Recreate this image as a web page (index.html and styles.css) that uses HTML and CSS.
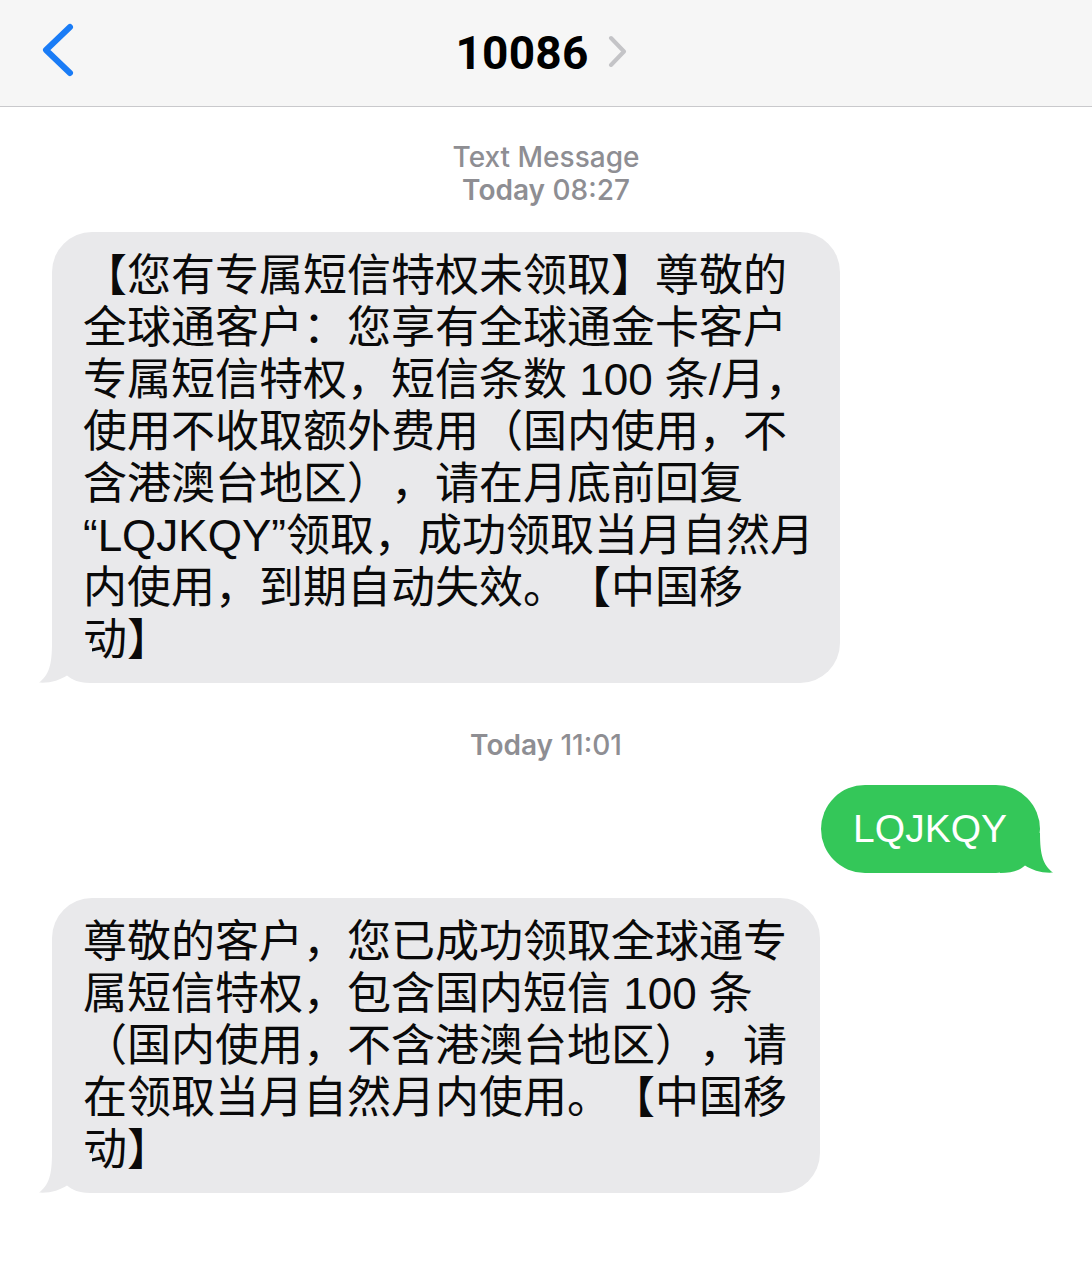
FILE: index.html
```html
<!DOCTYPE html>
<html lang="zh-CN">
<head>
<meta charset="utf-8">
<title>10086</title>
<link rel="stylesheet" href="styles.css">
</head>
<body>
<header class="nav">
  <div class="nav-left">
    <svg class="back" width="40" height="60" viewBox="0 0 40 60" aria-hidden="true">
      <polyline points="33,7 9,30 33,53" fill="none" stroke="#1a7cf6" stroke-width="6" stroke-linecap="round" stroke-linejoin="round"/>
    </svg>
  </div>
  <div class="nav-title">
    <span class="title-text">10086</span>
    <svg class="title-chev" width="20" height="32" viewBox="0 0 20 32" aria-hidden="true">
      <polyline points="3,3 16,16.5 3,30" fill="none" stroke="#c4c4c7" stroke-width="4" stroke-linecap="round" stroke-linejoin="round"/>
    </svg>
  </div>
  <div class="nav-right"></div>
</header>

<main class="thread">
  <div class="stamp stamp-first">
    <div class="stamp-label">Text Message</div>
    <div><span class="stamp-day">Today</span> 08:27</div>
  </div>

  <div class="bubble in bubble-wide">
    【您有专属短信特权未领取】尊敬的<br>全球通客户：您享有全球通金卡客户<br>专属短信特权，短信条数 100 条/月，<br>使用不收取额外费用（国内使用，不<br>含港澳台地区），请在月底前回复<br>“LQJKQY”领取，成功领取当月自然月<br>内使用，到期自动失效。【中国移<br>动】
    <svg class="tail tail-in" width="56" height="40" viewBox="0 0 56 40" aria-hidden="true">
      <path d="M16 0 C16 22 13 32 3 39.6 C14 40.4 24 37 31 32.5 C36 37 43 40 56 40 L56 0 Z" fill="#e9e9eb"/>
    </svg>
  </div>

  <div class="stamp stamp-second">
    <div><span class="stamp-day">Today</span> 11:01</div>
  </div>

  <div class="bubble out">
    LQJKQY
    <svg class="tail tail-out" width="56" height="40" viewBox="0 0 56 40" aria-hidden="true">
      <path d="M40 0 C40 22 43 32 53 39.6 C42 40.4 32 37 25 32.5 C20 37 13 40 0 40 L0 0 Z" fill="#34c759"/>
    </svg>
  </div>

  <div class="bubble in bubble-narrow">
    尊敬的客户，您已成功领取全球通专<br>属短信特权，包含国内短信 100 条<br>（国内使用，不含港澳台地区），请<br>在领取当月自然月内使用。【中国移<br>动】
    <svg class="tail tail-in" width="56" height="40" viewBox="0 0 56 40" aria-hidden="true">
      <path d="M16 0 C16 22 13 32 3 39.6 C14 40.4 24 37 31 32.5 C36 37 43 40 56 40 L56 0 Z" fill="#e9e9eb"/>
    </svg>
  </div>
</main>
</body>
</html>
```

FILE: styles.css
```css
* {
  box-sizing: border-box;
}

html, body {
  margin: 0;
  padding: 0;
  background: #ffffff;
}

body {
  width: 1092px;
  min-height: 1280px;
  font-family: "Liberation Sans", "Noto Sans CJK SC", sans-serif;
  color: #000;
}

/* ---------- navigation bar ---------- */
.nav {
  height: 107px;
  background: #f6f6f6;
  border-bottom: 1px solid #c9c9cc;
  display: grid;
  grid-template-columns: 1fr auto 1fr;
  align-items: center;
}

.nav-left {
  align-self: start;
  padding-top: 20px;
  padding-left: 37px;
}

.back {
  display: block;
}

.nav-title {
  display: flex;
  align-items: center;
  gap: 20px;
  padding-right: 8px;
}

.title-text {
  font-family: Roboto, "Liberation Sans", sans-serif;
  font-weight: 700;
  font-size: 46px;
  line-height: 56px;
  letter-spacing: 0.2px;
}

.title-chev {
  display: block;
  margin-top: -4px;
}

/* ---------- thread ---------- */
.thread {
  display: flex;
  flex-direction: column;
  padding: 0 52px;
}

.stamp {
  align-self: center;
  text-align: center;
  font-family: Inter, "Liberation Sans", sans-serif;
  font-size: 28px;
  line-height: 33px;
  font-weight: 500;
  color: #8e8e93;
}

.stamp-day {
  font-weight: 600;
}

.stamp-first {
  margin-top: 34px;
}

.stamp-second {
  margin-top: 46px;
}

.bubble {
  position: relative;
  white-space: nowrap;
}

.bubble.in {
  align-self: flex-start;
  background: #e9e9eb;
  border-radius: 40px;
  padding: 18px 31px 17px;
  font-size: 44px;
  line-height: 52px;
  color: #0a0a0a;
  text-spacing-trim: space-all;
  font-feature-settings: "halt" 0, "chws" 0;
}

.bubble-wide {
  width: 788px;
  margin-top: 25px;
}

.bubble-narrow {
  width: 768px;
  margin-top: 25px;
}

.bubble.out {
  align-self: flex-end;
  margin-top: 23px;
  background: #34c759;
  color: #ffffff;
  border-radius: 44px;
  padding: 18px 33px 18px 32px;
  font-size: 39px;
  line-height: 52px;
}

.tail {
  position: absolute;
  bottom: 0;
  display: block;
}

.tail-in {
  left: -16px;
}

.tail-out {
  right: -16px;
}
```
